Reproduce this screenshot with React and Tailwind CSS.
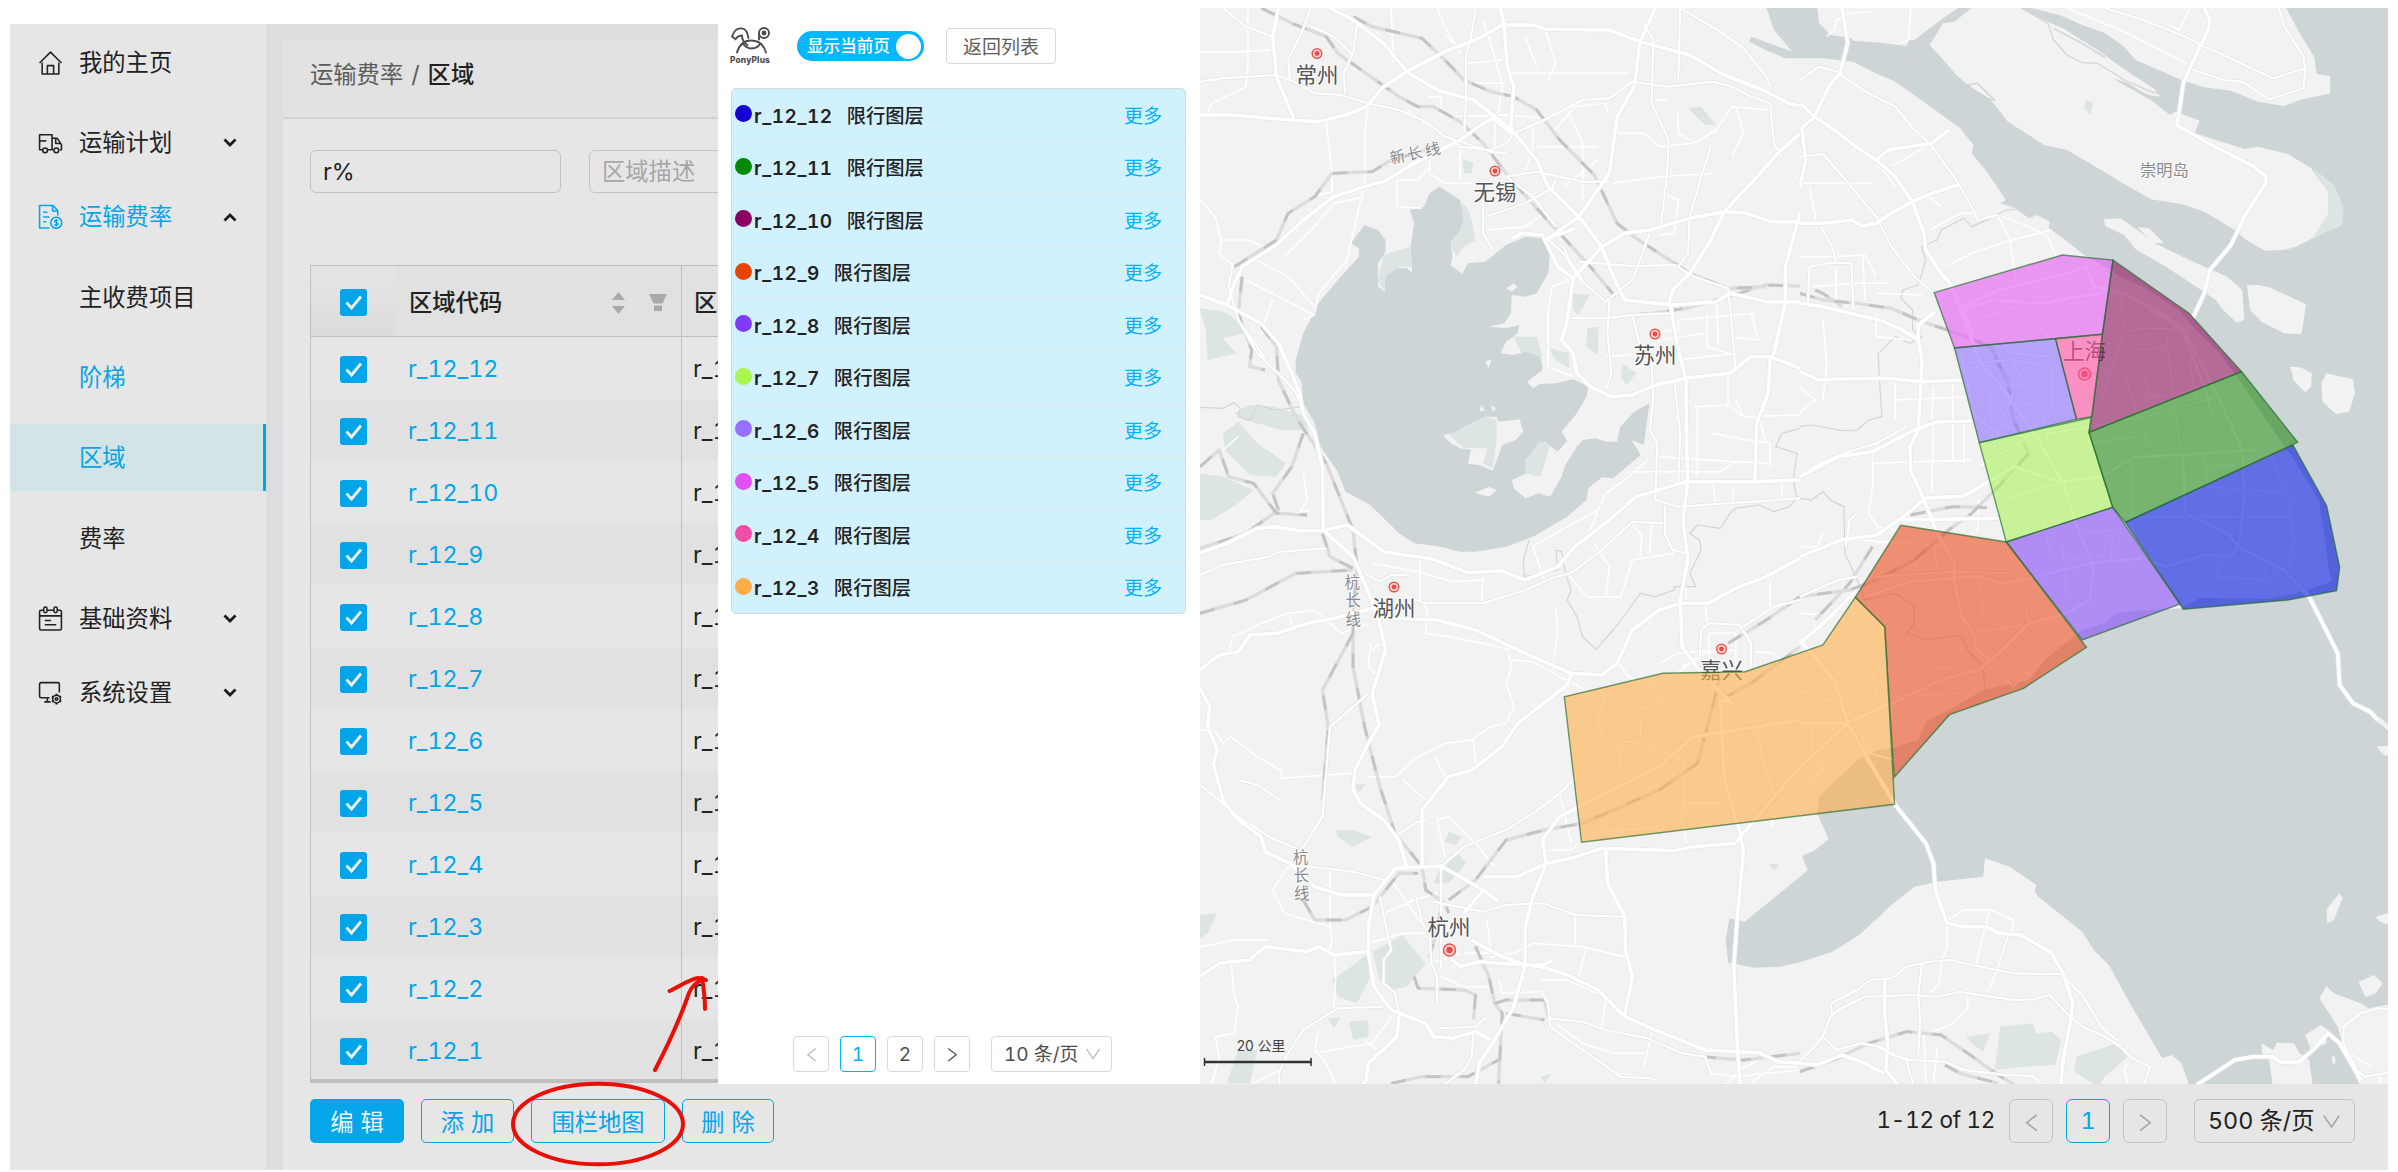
import React from "react";

const nav = [
  { label: "我的主页", icon: "home", gap: "mt-[5px]" },
  { label: "运输计划", icon: "truck", arrow: "down", gap: "mt-[13px]" },
  { label: "运输费率", icon: "bill", arrow: "up", active: true, gap: "mt-[7px]" },
  { label: "主收费项目", gap: "mt-[14px]" },
  { label: "阶梯", active: true, gap: "mt-[13px]" },
  { label: "区域", active: true, selected: true, gap: "mt-[13px]" },
  { label: "费率", gap: "mt-[14px]" },
  { label: "基础资料", icon: "calendar", arrow: "down", gap: "mt-[13px]" },
  { label: "系统设置", icon: "monitor", arrow: "down", gap: "mt-[7px]" },
];

const iconPaths = {
  home: (
    <>
      <path d="M1.5 12.5 12 2l10.5 10.5" />
      <path d="M4 12v11h16V12" />
      <path d="M9 23v-8h6v8" />
    </>
  ),
  truck: (
    <>
      <path d="M4 19H1.5V4.500H13.500V19M9.500 19h5" />
      <path d="M13.500 8h5l4 6v5h-1.500M17 8.500V13h5" />
      <path d="M1.500 10.500H8" />
      <circle cx="6.800" cy="19.500" r="2.300" />
      <circle cx="17.600" cy="19.500" r="2.300" />
    </>
  ),
  bill: (
    <>
      <path d="M11 23H1.500V1.500h13l4.500 5V11" />
      <path d="M14 1.800v5h5M5 8h4M5 12.500h6M5 17h3" />
      <circle cx="17.500" cy="18" r="5.300" />
      <path d="M19.300 16.200c-.8-1-3.400-.9-3.400.5 0 1.600 3.500.7 3.500 2.500 0 1.500-2.900 1.600-3.700.3M17.600 14.500v7" strokeWidth="1.200" />
    </>
  ),
  calendar: (
    <>
      <rect x="1.500" y="4" width="21" height="19" rx="1.500" />
      <path d="M1.500 9.500h21M6.500 14h6M6.500 18h11" />
      <rect x="5.500" y="1" width="3.200" height="5.500" rx="1.600" fill="#e6e6e6" />
      <rect x="15.300" y="1" width="3.200" height="5.500" rx="1.600" fill="#e6e6e6" />
    </>
  ),
  monitor: (
    <>
      <path d="M11 17H3a1.500 1.500 0 0 1-1.500-1.500V4A1.500 1.500 0 0 1 3 2.500h16A1.500 1.500 0 0 1 20.500 4v8M9 17v4M6 21h6" />
      <circle cx="17.800" cy="18.300" r="3.700" />
      <circle cx="17.800" cy="18.300" r="1.200" />
      <path d="M17.800 13.200v1.400M17.800 22v1.400M22.200 15.700l-1.200.7M14.600 20.100l-1.200.7M13.400 15.700l1.200.7M21 20.100l1.200.7" strokeWidth="2" />
    </>
  ),
};

function NavItem({ item }) {
  const tone = item.active ? "text-[#05a5e9]" : "text-[#222]";
  const bg = item.selected ? "bg-[#d3e4e7] border-r-[3px] border-[#05a5e9]" : "";
  return (
    <div className={`flex h-[67px] shrink-0 items-center ${item.gap} ${bg} ${tone}`}>
      <div className="flex w-[69px] pl-[28px]">
        {item.icon && (
          <svg className="size-[25px]" viewBox="0 0 24 24" fill="none" stroke="currentColor" strokeWidth="1.5" strokeLinejoin="round">
            {iconPaths[item.icon]}
          </svg>
        )}
      </div>
      <span className="w-[144px] text-[23.3px] leading-none">{item.label}</span>
      {item.arrow && (
        <svg className="size-[14px] text-[#1b1b1b]" viewBox="0 0 14 14" fill="none" stroke="currentColor" strokeWidth="2.800">
          <path d={item.arrow === "down" ? "M1.500 3.500 7 9l5.500-5.500" : "M1.500 10.500 7 5l5.500 5.500"} />
        </svg>
      )}
    </div>
  );
}

function Check() {
  return (
    <span className="flex size-[27px] items-center justify-center rounded-[3px] bg-[#03a4e8]">
      <svg className="size-[19px]" viewBox="0 0 19 19" fill="none" stroke="#e9f3f7" strokeWidth="2.800">
        <path d="m2.500 9.500 5 5.500L17 3.500" />
      </svg>
    </span>
  );
}

const codes = [12, 11, 10, 9, 8, 7, 6, 5, 4, 3, 2, 1];

const layers = [
  { code: "r_12_12", dot: "bg-[#1700d6]" },
  { code: "r_12_11", dot: "bg-[#048a04]" },
  { code: "r_12_10", dot: "bg-[#8a0060]" },
  { code: "r_12_9", dot: "bg-[#e64403]" },
  { code: "r_12_8", dot: "bg-[#7f3cf8]" },
  { code: "r_12_7", dot: "bg-[#a9f64c]" },
  { code: "r_12_6", dot: "bg-[#9770ff]" },
  { code: "r_12_5", dot: "bg-[#e34ff5]" },
  { code: "r_12_4", dot: "bg-[#f04ea6]" },
  { code: "r_12_3", dot: "bg-[#fdae49]" },
];

function Chevron({ dir, className }) {
  const d = { left: "M12.500 1.500 4 8.200l8.500 6.700", right: "M3.500 1.500 12 8.200l-8.500 6.700", down: "M1.500 3 8 12.500 14.500 3" }[dir];
  return (
    <svg className={className} viewBox="0 0 16 16" fill="none" stroke="currentColor" strokeWidth="1.300">
      <path d={d} />
    </svg>
  );
}

/* Map geometry. West paths use the west tile grid, east paths the east tile grid. */
const WEST = "translate(1200 0) scale(0.38265 0.33333)";
const EAST = "translate(1800 0) scale(0.38139 0.33333)";

const lake =
  "M625 560 660 585 680 600 688 660 680 690 655 730 660 770 655 795 685 822 700 790 745 785 800 735 850 710 895 715 915 750 910 820 880 880 850 890 815 885 812 940 795 970 755 980 800 985 835 975 830 1000 800 1025 785 1060 820 1065 850 1055 890 1070 895 1110 855 1145 870 1165 890 1152 930 1150 975 1138 1015 1160 1010 1190 985 1240 945 1295 960 1322 935 1355 900 1325 880 1345 850 1380 862 1415 815 1440 820 1465 850 1495 885 1480 915 1490 945 1430 955 1395 985 1340 1000 1320 1035 1315 1060 1325 1090 1325 1098 1280 1135 1235 1175 1210 1165 1290 1160 1335 1128 1320 1152 1365 1080 1435 1050 1432 1015 1465 1010 1500 960 1550 870 1610 800 1640 720 1655 680 1655 630 1640 560 1630 520 1600 445 1515 380 1475 360 1415 315 1340 300 1270 270 1210 265 1145 250 1120 250 1080 270 1000 310 910 360 840 415 770 415 745 395 730 430 675 465 690 485 720 485 755 465 790 465 860 482 875 485 830 515 805 540 805 555 820 550 740 560 670 548 630 585 620 600 580Z";

const sea =
  "M-88 24-68 90-20 155-75 132-128 110-133 125-90 150-38 175 0 175 60 175 140 185 190 215 250 245 330 310 420 385 455 435 450 460 490 515 540 600 525 610 560 622 600 655 622 645 655 665 652 685 690 715 745 765 800 800 840 830 900 860 1000 935 1030 980 1100 1060 1158 1150 1240 1290 1290 1370 1360 1500 1375 1600 1385 1700 1395 1745 1300 1780 1230 1797 1050 1793 1000 1825 900 1830 830 1840 800 1870 740 1890 650 1970 600 2040 480 2070 400 2125 330 2165 310 2220 245 2245 200 2252 150 2280 50 2390 45 2440 75 2518 40 2550 5 2568 20 2610 0 2630-145 2765-185 2755-195 2820-188 2888-120 2903-50 2900 0 2887 85 2855 155 2805 245 2710 300 2660 360 2645 480 2630 485 2575 550 2600 620 2655 615 2672 625 2690 740 2795 770 2850 810 2895 870 3020 950 3175 975 3165 1000 3190 1022 3260 1560 3260 1560 24Z";

const eastLand = [
  "M45 24 50 70 80 105 135 115 138 122 210 128 280 138 285 120 300 120 375 55 415 24Z",
  "M450 24 405 65 375 70 340 135 380 185 410 225 440 255 495 295 515 320 545 365 600 405 640 435 700 450 760 490 840 545 920 598 1000 612 1060 635 1140 690 1170 720 1220 752 1270 750 1300 740 1345 715 1372 700 1385 640 1385 575 1340 505 1280 462 1200 440 1165 447 1035 400 1048 362 985 335 970 345 920 300 850 255 820 235 860 250 910 285 945 290 930 268 860 215 780 150 690 85 640 60 580 24Z",
  "M605 24 680 45 740 75 800 100 850 140 880 180 930 205 1000 240 1060 262 1130 272 1200 305 1270 318 1310 300 1390 280 1390 228 1355 222 1348 170 1310 100 1275 24Z",
  "M797 658 840 655 885 690 930 730 1040 790 1120 830 1160 870 1165 960 1145 968 1110 930 1090 900 1055 872 960 800 880 748 850 705 800 678Z",
  "M885 682 915 685 955 730 925 728Z",
  "M1172 855 1200 855 1230 862 1327 912 1315 1003 1270 1000 1210 965 1180 930Z",
  "M1285 1100 1312 1102 1342 1120 1340 1160 1325 1177 1295 1142Z",
  "M1380 1120 1450 1138 1455 1180 1440 1235 1405 1242 1370 1205 1367 1150Z",
  "M1502 2155 1520 2150 1560 2195 1560 2210 1530 2180Z",
  "M1512 2240 1560 2235 1560 2270 1530 2265Z",
  "M1415 2680 1422 2695 1400 2760 1383 2770 1380 2730 1400 2700Z",
  "M1510 2750 1545 2738 1545 2775 1520 2765Z",
  "M1465 2945 1505 2925 1528 2950 1510 2980 1482 2992Z",
  "M1380 2958 1400 2980 1470 3010 1490 3025 1560 3010 1560 3260 1470 3260 1430 3170 1410 3080 1362 2995Z",
  "M1325 3105 1365 3075 1385 3090 1380 3130 1340 3150Z",
  "M1210 3130 1240 3150 1250 3128 1295 3130 1310 3160 1335 3180 1345 3260 1240 3260 1230 3180 1212 3165Z",
  "M1395 3165 1405 3175 1402 3195 1395 3185Z",
];

const lakeIsles = [
  "M635 1305 660 1300 700 1275 745 1250 775 1250 780 1265 835 1258 845 1295 825 1320 790 1335 765 1412 730 1395 700 1392 708 1350 680 1345 655 1330Z",
  "M800 865 820 850 830 860 815 875Z",
  "M745 1085 762 1078 755 1105Z",
  "M755 1460 775 1470 755 1490 718 1478Z",
  "M735 1215 745 1230 730 1235ZM760 1215 775 1225 765 1235Z",
];

const parksWest = [
  "M0 925 60 935 85 950 120 1000 60 1015 95 1060 20 1080 15 990Z",
  "M650 580 700 625 710 660 720 720 690 740 670 770 655 735 685 680Z",
  "M480 765 550 740 552 800 520 800 490 835 480 870 465 840Z",
  "M685 475 715 490 710 520 690 520Z",
  "M1275 325 1310 320 1348 375 1320 375Z",
  "M975 880 1018 885 990 945 975 930Z",
  "M1012 985 1042 980 1040 1065 1010 1040Z",
  "M1105 1090 1140 1120 1115 1155 1100 1130Z",
  "M820 1010 880 1010 895 1070 840 1060Z",
  "M915 1045 965 1060 965 1105 925 1075Z",
  "M90 1240 130 1215 190 1220 285 1250 280 1290 210 1290 150 1270 115 1260Z",
  "M60 1300 100 1265 150 1330 225 1390 200 1430 130 1425 65 1350Z",
  "M0 1420 60 1430 140 1470 100 1510 30 1560 0 1560Z",
  "M650 1305 745 1250 775 1260 775 1320 765 1405 740 1390 750 1345 690 1345Z",
  "M885 1325 915 1335 905 1370 890 1430 850 1420 850 1385Z",
  "M355 2490 400 2490 450 2510 400 2540 360 2510Z",
  "M650 2495 685 2510 670 2535 640 2525Z",
  "M670 2555 695 2590 650 2650 610 2650 630 2600Z",
  "M0 2745 45 2740 20 2800 0 2815Z",
  "M450 2855 530 2805 560 2850 590 2890 540 2960 500 2970 470 2940Z",
  "M345 2940 395 2900 440 2860 450 2920 410 3010 360 2990Z",
  "M335 3055 368 3050 350 3085ZM390 3065 440 3060 440 3110 400 3120Z",
  "M100 3150 150 3150 130 3250 70 3250Z",
  "M405 2355 435 2350 415 2378ZM1485 2590 1515 2595 1500 2612ZM890 3230 920 3220 900 3250Z",
];

const parksEast = [
  "M750 300 770 310 760 345 745 325Z",
  "M1345 505 1400 555 1425 620 1422 675 1345 715 1385 640 1385 575Z",
  "M435 3110 498 3100 480 3155 450 3130Z",
  "M525 3080 610 3070 620 3100 660 3095 685 3120 670 3195 590 3200 510 3210Z",
  "M725 3170 830 3130 860 3170 800 3230 780 3260 720 3215Z",
  "M365 1550 395 1550 385 1565Z",
];

const majorWest = [
  "M205 24 190 110 200 230 245 355",
  "M0 345 80 345 240 360 310 365 380 345 435 320 480 260 540 215 640 155 720 120 790 75 870 75 905 88 1070 90 1150 125 1280 165 1370 225 1470 270 1540 310 1568 318",
  "M340 24 400 60 480 130 540 215 620 270 715 300 815 390 880 480 910 560 990 650 1050 740 1080 830 1110 900 1235 915 1350 905 1385 880 1480 905 1568 905",
  "M785 24 795 75 803 200 820 260 812 380 820 400",
  "M0 885 70 915 160 970 205 1030 240 1120 260 1180 270 1240 300 1300 320 1400 322 1590 400 1670 445 1790 465 1850 485 1950 450 2080 468 2175 440 2230 405 2310 400 2370 420 2410 480 2460 520 2520 540 2600",
  "M70 915 90 850 110 800 200 735 270 660 350 590 430 560 480 545 560 490 680 420 740 370 765 355 815 400",
  "M1190 24 1150 125 1135 260 1090 350 1070 520 990 650 910 715 980 685",
  "M815 715 840 700 895 705 935 800 975 835 1050 740 1110 700 1175 690 1280 655 1370 635 1430 640 1490 665 1568 665",
  "M975 835 960 960 945 1020 975 1060 985 1120 1020 1160 1075 1190 1130 1185 1190 1155 1270 1135 1385 1120 1440 1070 1490 1070 1568 1105",
  "M1230 915 1245 1020 1270 1140 1272 1350 1275 1440 1262 1560 1275 1680 1255 1800 1260 1940 1310 2020 1390 2110 1360 2100 1370 2340 1412 2500 1420 2560 1405 2740 1395 2900 1405 3150 1412 3260",
  "M1225 915 1235 870 1280 820 1330 730 1370 635 1440 550 1510 460 1568 400",
  "M1568 640 1530 800 1530 905 1500 1060 1490 1080 1485 1180 1455 1270 1450 1440",
  "M0 1660 70 1630 150 1585 200 1580 260 1592 320 1592 385 1575 480 1655 610 1678 700 1718 785 1712 850 1740 935 1700 980 1640 1070 1560 1140 1490 1270 1445 1450 1445 1568 1440",
  "M0 2010 50 1965 100 1955 130 1905 200 1900 280 1870 350 1855 450 1825 510 1855 620 1860 720 1890 850 1960 970 2020 1050 2025 1090 1990 1130 1890 1200 1830 1255 1810 1330 1810 1400 1765 1480 1730 1568 1675",
  "M970 2020 960 2055 830 2170 790 2240 710 2310 650 2330 580 2430 580 2595",
  "M0 2065 25 2120 20 2180 45 2250 35 2290 60 2400 95 2455 160 2510 170 2555 235 2590 300 2660 370 2685 455 2685 510 2605 630 2598 740 2670 780 2705",
  "M455 2685 440 2780 440 2860 455 2960 500 3030 590 3070 610 3110 660 3115 720 3095 760 3120",
  "M0 2930 50 2890 130 2880 170 2840 280 2855 310 2840 350 2865 435 2855",
  "M520 3045 515 3110 440 3190 435 3240 420 3260",
  "M710 2820 780 2865 850 2895 900 2895 920 2880M655 2875 680 2900 730 2885 850 2895 850 2780 870 2690 905 2590 895 2520 940 2450 990 2420 1130 2340 1200 2300 1290 2210 1568 2160",
  "M740 2670 690 2740M740 2630 830 2630 905 2590 970 2575 1050 2545 1240 2552 1290 2540 1400 2530 1412 2510 1568 2300",
  "M850 2895 820 3020 770 3120 730 3190 720 3260",
  "M850 2895 890 2900 960 2925 1040 2970 1110 3050 1200 3095 1320 3150 1405 3155 1460 3158 1510 3185 1568 3190",
  "M1060 2545 1065 2650 1110 2750 1112 2850 1130 2930 1110 3045",
];

const midWest = [
  "M0 245 60 235 200 225 245 245 300 280 370 285 440 310 520 330 590 365 640 410 760 455 800 460",
  "M60 24 120 80 190 110M290 24 265 100 230 180 235 240",
  "M410 75 400 160 375 220 380 280M285 75 350 110 400 165",
  "M820 400 900 360 1000 300 1070 295 1130 245 1220 260 1340 245 1390 260 1440 290 1490 310 1500 430 1520 470",
  "M1160 75 1185 120 1180 310 1225 420 1220 530 1205 670",
  "M1255 24 1250 240M1255 24 1360 95 1420 145 1480 230 1490 260",
  "M800 530 880 515 1000 545 1070 545M800 530 870 590 930 680",
  "M1335 440 1310 530 1280 650 1275 760 1250 800",
  "M990 785 1130 798 1240 795 1290 830 1380 865 1390 980 1400 1110",
  "M970 955 1060 955 1130 945 1240 940M1070 900 1065 1000 1075 1120 1060 1170",
  "M720 24 710 100 695 170 695 300 690 400",
  "M650 410 680 440 760 450 800 430 820 400M770 360 770 440",
  "M740 600 740 700 765 750M745 650 850 610 920 565 930 540",
  "M905 715 950 760 990 835 1060 905M950 740 970 790 1000 840",
  "M1060 905 1130 840 1175 700M1130 945 1150 1040 1180 1080 1185 1200 1175 1290 1195 1330 1190 1500 1250 1520 1568 1495",
  "M1240 1140 1245 1200 1255 1300 1250 1450M1215 1520 1215 1600 1235 1650 1275 1660",
  "M0 1725 60 1695 180 1670 210 1655 330 1645",
  "M430 1720 470 1745 500 1725 540 1725M520 1780 590 1810 740 1810 850 1770 930 1730 970 1720 1050 1650 1130 1565 1210 1570",
  "M440 2080 400 2120 340 2180 330 2320 320 2450 265 2550M250 2595 400 2615 480 2640",
  "M0 2355 40 2390 100 2450 180 2510 250 2545",
  "M630 2600 630 2900M520 2500 570 2465 590 2460",
  "M470 2690 490 2800 500 2850 480 2880 480 2950 510 2980 520 3040",
  "M630 2600 690 2540 800 2490 870 2440 940 2380 985 2330",
  "M610 2705 740 2735 800 2715 900 2710 980 2745 1110 2750",
  "M565 2690 580 2770 600 2800 605 2890 620 2930 620 3010",
  "M480 3020 360 3025 270 3090 230 3160 205 3220 210 3260",
  "M890 2970 910 3010 915 3080 1000 3150 1100 3230 1180 3235",
  "M910 3055 1000 3065 1060 3090 1170 3115 1260 3160 1320 3170 1340 3230",
  "M625 3085 720 3080 750 3050M715 3090 710 3170 690 3210 630 3260",
  "M1310 1890 1330 1870 1410 1875 1440 1930 1440 2010M1310 1890 1305 1980",
  "M1568 1800 1500 1820 1420 1880M1050 2215 1150 2230 1155 2130 1130 2080",
  "M100 2340 150 2355 210 2400",
  "M85 800 75 860 100 960 150 1060 240 1160 260 1200M100 960 170 1075",
];

const minorWest = [
  "M0 155 100 155 190 150M125 24 125 200 120 260 30 310 20 340M330 365 345 520 345 575 290 590M440 320 430 400 430 550 400 700 380 800",
  "M430 590 350 610 290 690 220 770M300 940 310 880 390 770M0 600 40 650 55 720 50 760 90 800M55 720 130 720 180 750",
  "M130 770 230 830 300 920M190 900 170 960 160 1000M120 840 300 945 270 960",
  "M500 24 505 190M620 24 640 80 680 160M740 60 770 170 790 260 780 340M850 110 880 200M900 80 930 190 910 240M800 220 1120 220",
  "M700 190 790 180M700 250 800 250M640 350 800 345 900 355M595 290 630 290 630 350M540 330 600 380",
  "M920 400 980 320 1060 310 1065 340M870 380 870 450 850 510M960 330 1000 430 1000 600M880 440 1040 440M1040 480 950 560",
  "M1080 400 1160 400 1200 440 1290 430 1350 390 1390 320 1490 330M1250 340 1250 400 1290 425M1080 550 1200 530 1340 520M1400 320 1420 400 1390 470",
  "M515 540 515 620 580 625M515 540 570 540 600 500M600 440 600 520 640 550 710 550M680 450 680 540",
  "M910 1100 910 930 920 860 980 835M1060 1070 1170 1060 1200 1020 1320 1000M1250 1000 1250 960 1450 940M1325 940 1325 1040 1380 1060M1350 900 1355 1030M1390 1010 1460 1020 1440 940M1250 1080 1400 1060",
  "M920 1105 975 1130M1130 1415 1210 1415 1360 1415 1400 1385 1490 1390M1200 1370 1400 1385M1290 1220 1380 1215 1420 1250 1568 1245M1300 1220 1300 1430M1380 1120 1380 1215M1340 1300 1430 1320 1490 1330 1490 1400M1340 1450 1350 1520M1395 1460 1390 1520M1520 1440 1520 1500",
  "M1040 1530 1060 1480 1110 1440 1170 1380M870 1640 960 1580 1040 1530 1010 1620M870 1640 900 1740M1030 1630 1070 1700 1060 1790M960 1720 1010 1790 1100 1790 1130 1680 1240 1660M1130 1570 1155 1610 1150 1670M1180 1570 1175 1660",
  "M575 1685 575 1800 595 1830 590 1900 650 1910 740 1930 810 1950M450 1690 570 1715 660 1745 740 1740M740 1730 735 1810M930 1820 935 1900 920 2010",
  "M805 1960 815 2000 800 2050 820 2120 800 2170 760 2180M810 1980 870 1985 940 2030 1000 2065M440 2330 510 2330 570 2270 640 2230 710 2220 760 2180M615 2270 640 2330M715 2220 720 2290",
  "M0 2190 40 2195 60 2230 80 2210 150 2270 210 2310 215 2335 330 2325 400 2320M75 1960 85 1910 160 1870 230 1840 300 1830 370 1900 440 1870M235 1850 240 1880M445 1930 440 2000 465 2030M470 1930 450 1950",
  "M300 2600 230 2600 190 2670 220 2740 340 2780 345 2820 335 2860M340 2610 340 2780M480 2740 560 2700 620 2680M500 2640 560 2740 590 2790M440 2830 530 2800 590 2800M0 2840 90 2820 180 2820M80 2880 90 2990 100 3020 90 3100 40 3110 50 3170 30 3260",
  "M350 2870 355 2930 350 3020M310 3090 300 3150 330 3190 355 3260M300 3160 390 3140 450 3130 500 3050M430 3120 460 3150M140 3250 210 3210M530 2340 560 2370 590 2400",
  "M620 2460 650 2450 720 2530 770 2600M620 2460 640 2570M940 2380 960 2480 970 2530M910 2550 970 2550 1000 2520M750 2760 760 2850M760 2870 820 2860 870 2830 1000 2840 1110 2870M980 2750 980 2840M1010 2840 990 2930",
  "M690 2860 770 2860M600 2890 680 2860M760 2960 690 2960 630 2930M890 2940 960 2940 1040 2980M1060 3000 1050 3080M1180 3100 1160 3200M930 3070 1000 3130 1080 3160 1160 3160M850 2930 820 2980M780 2940 790 2980 890 2975",
  "M1330 1900 1330 2010 1400 2010 1400 1900ZM1260 2000 1320 1960 1400 1950M1450 1955 1500 1960 1540 2010M1490 1740 1490 1830M1320 1815 1325 1870M1095 1990 1120 2030 1180 2060 1260 2010 1310 1970M1060 2090 1040 2150 1055 2220M1155 2130 1230 2095",
  "M1095 2240 1095 2310M1150 2230 1260 2280M1260 2480 1265 2270M1260 2410 1370 2410M1450 2150 1470 2280 1500 2380M1490 2480 1510 2440 1568 2420M1270 2530 1265 2480M1020 2500 1200 2480",
  "M640 100 660 130M1190 300 1220 300M1210 580 1250 600 1240 700 1200 705M750 690 850 680 900 640M1180 1000 1240 990M1140 1100 1200 1090M1340 3220 1400 3230 1568 3210M1370 3260 1410 3210 1460 3180M1440 3250 1500 3200 1560 3200M1100 3220 1190 3240",
  "M1270 1760 1270 1800M1200 1990 1250 1960 1350 1950M1460 1250 1480 1330M1400 1200 1420 1250M270 1420 280 1500 260 1540M240 1540 290 1530M100 1310 60 1350",
];

const majorEast = [
  "M110 24 125 130 105 220 75 260 38 350 5 385 15 480 0 560",
  "M0 310 38 350 90 390 140 435 200 480 250 530 295 605 325 700 330 750 370 820 400 860 430 930 455 1010",
  "M200 480 230 450 345 430 390 390",
  "M0 670 60 670 135 660 165 678 200 670 240 640 295 605 345 580 415 555",
  "M0 910 60 920 150 945 210 960 260 985 310 1020M355 935 310 975 310 1020 320 1080 317 1150 310 1290 288 1340 290 1410 325 1500 360 1600 405 1690 405 1750 425 1850 460 1910 460 1945 495 1975",
  "M0 1115 50 1140 100 1137 230 1135 317 1145 430 1140",
  "M1060 24 1075 60 1070 90 1020 210 1005 250 995 330 988 375 1080 435 1190 500 1222 530 1220 550 1165 650 1130 735 1075 810 1060 880 1030 955",
  "M0 1430 100 1370 190 1355 300 1290 360 1265 450 1263",
  "M0 1670 110 1620 200 1605 260 1560 330 1495 430 1488 560 1400 680 1445 790 1430 880 1370 1000 1365 1190 1350",
  "M265 1560 520 1555M145 1775 80 1850 0 1930",
  "M170 1790 290 1745 400 1735 470 1730 530 1750 600 1735 760 1690 900 1675",
  "M240 2170 240 2110 380 2035 470 2010 530 1950 600 1870 700 1840 760 1800 770 1700 720 1560 690 1450 620 1310 540 1180 470 1080 410 900",
  "M0 1920 90 2040 125 2170 200 2320 250 2415 330 2530 350 2590 355 2670 385 2770 430 2780 490 2780 520 2800 580 2805 660 2860 690 2920 715 3010 710 3060 690 3180 683 3260",
  "M0 2170 120 2170 240 2110M125 2170 50 2250 0 2300",
  "M920 1685 960 1700 1060 1665 1130 1670 1150 1640 1210 1675 1270 1710 1335 1790 1410 1960 1415 2055 1450 2110 1495 2135 1515 2160",
  "M1005 1370 1010 1540 1120 1600 1150 1640 1165 1500 1160 1350",
  "M430 920 520 870 700 820 750 800 770 860 850 880 950 950 1010 1000 1100 1200 1160 1350",
  "M390 860 430 930 500 900 640 910 700 895 790 880M850 880 940 930 1000 985 1060 1160 1080 1240",
  "M1040 3255 1080 3225 1140 3180 1190 3170 1240 3170 1260 3187 1310 3185 1345 3150 1385 3100 1415 3130 1450 3200 1470 3240",
  "M222 2940 222 3040 230 3130 225 3210 260 3260M0 3190 45 3195 110 3165 160 3185 220 3220",
];

const midEast = [
  "M0 470 60 462 120 540 200 650 240 740 300 830 350 878M100 220 180 280 250 320 300 390 340 430 410 540 450 620 465 660 520 645",
  "M0 240 50 200 100 215M55 680 85 740 95 790M20 915 25 800 80 788 135 790 140 930",
  "M800 24 900 60 1010 110 1060 140 1110 165 1240 235 1325 205 1320 265 1230 298 1160 245 1110 240 1030 210M1255 24 1270 80 1320 170 1325 215",
  "M0 1430 60 1385 130 1355 200 1330 280 1280M0 1790 100 1740 150 1730",
  "M455 960 600 910 700 900M470 1010 560 1060 650 1070M440 1090 560 1080 650 1100M520 1000 560 1090 640 1260 650 1330M420 1050 460 1250 520 1300 600 1310",
  "M510 1340 530 1260 560 1180M470 1400 600 1310 760 1280 900 1250 1100 1190M820 1000 900 985 1020 990M780 1100 850 1120 890 1260M960 1000 980 1200 1000 1370",
  "M120 1640 130 1560 150 1540M200 1730 400 1715 550 1720M540 1640 570 1720 590 1800 600 1870M820 1600 815 1680M540 1700 480 1640",
  "M80 3010 150 2970 185 2940 240 2935 280 2900 340 2885 395 2880 450 2895 560 2920 690 2923",
  "M60 3110 80 3050 100 3030 170 2990 300 2985 360 2990 420 2975 470 2985 560 3000 615 2998 655 2985 700 3040 740 3080 800 3110 840 3140 870 3175 918 3200 900 3260",
  "M80 3010 85 3050M320 2890 310 2980 315 3060 310 3165M700 2940 740 2985 790 3080 830 3120M545 2810 520 2900",
  "M0 3180 30 3150 60 3110 95 3150 160 3130 210 3140 240 3165 290 3180M200 3140 280 3180 290 3230 300 3260M290 3180 380 3185 430 3210 540 3225 610 3228 640 3260",
  "M1560 3030 1515 3025 1470 3040 1425 3080 1425 3130 1460 3210 1480 3230 1560 3215",
];

const minorEast = [
  "M290 24 285 120 260 130M70 110 90 90 95 60 130 40 185 35M0 550 190 550M25 560 45 680M0 770 90 770 170 765 200 830M200 880 320 885M30 860 150 850 230 850M95 800 95 930M165 770 170 900",
  "M390 795 450 760 540 725 660 690M520 650 550 720 565 840M530 650 600 680 650 710 670 765M340 690 420 640 470 640M200 480 250 560M240 500 330 440M340 590 370 620M200 940 200 1010 290 1020",
  "M245 1200 450 1190M250 1150 250 1260M350 1160 345 1260M400 1150 400 1380M190 1360 190 1460 180 1540 205 1580 260 1590M190 1390 450 1380M350 1280 345 1480M430 1270 430 1390",
  "M700 24 860 100 1015 190M960 70 995 90 1020 30M0 1160 40 1200 25 1210 0 1240M60 960 70 1100 60 1200M0 1640 45 1640 60 1600M150 1620 400 1640M0 1840 60 1845M470 1500 465 1600",
  "M840 860 850 1000 820 1100 790 1200M880 1050 980 1040 1060 1030M870 1180 970 1190 1080 1150M900 1120 940 1250M1020 1080 1040 1200M600 930 640 1000 700 1060 760 1080M460 1100 520 1150 640 1160M560 1000 600 1090M500 1180 500 1260 560 1290",
  "M870 1400 870 1600M900 1300 920 1340M780 1540 900 1550 1150 1550 1280 1550M1060 1370 1070 1460 1290 1480M1240 1370 1280 1500 1295 1620 1280 1700M1100 1650 1095 1730 1230 1740 1260 1700M1210 1690 1230 1740M1060 1400 1190 1390",
  "M690 1640 700 1800M640 1570 660 1680M540 1610 560 1550 640 1520M740 1600 820 1590M700 1680 830 1660M740 1300 760 1330 880 1310M540 1500 640 1460 730 1440M510 1200 640 1220",
  "M300 1680 310 1740M350 1620 360 1720M470 1700 480 1850M240 2050 360 2000 410 2010M490 1990 560 2060 600 2010M120 1870 90 1900M540 1990 600 2020M250 2090 420 2080M430 1900 560 1880 680 1860M190 2010 200 2080",
  "M0 2070 60 2100 120 2110M30 2180 30 2260 70 2320M160 2200 180 2260 250 2280M0 2370 60 2310M390 2760 430 2730 500 2730 560 2760 555 2800M495 2735 460 2900M385 2780 385 2840 370 2900 365 2950 345 2975M520 2900 495 2970M440 2990 440 3025 400 3070 350 3095",
  "M325 3100 330 3250M360 3140 350 3250M860 3190 850 3210 860 3250M1440 3160 1500 3200M1520 3230 1525 3260M640 1180 700 1200 740 1190M660 1100 660 1230",
];

const railWest = [
  "M160 24 240 70 330 110 360 160 440 225 520 290 570 320 610 320 680 365 740 430 800 520 860 600 940 700 1020 800 1085 890M1130 945 1180 940 1270 925 1380 890 1480 855 1568 858",
  "M400 50 450 80 580 115 640 180 690 240 760 275 820 290 880 330 940 420 1030 525 1090 670 1140 715 1280 820 1380 865 1480 860",
  "M90 800 200 720 230 640 300 590 345 520 450 515 500 480 620 440",
  "M110 830 100 940 135 1050 130 1100 170 1110M160 980 200 1040 205 1140 250 1250 330 1390 400 1590 410 1700 400 1850 400 2000 430 2180 470 2360 510 2500 580 2600 590 2670 640 2710 650 2740",
  "M0 1400 50 1350 75 1430 140 1450 200 1540 280 1545M270 1300 240 1400 190 1480 205 1530 120 1600 0 1645M320 1600 340 1670 400 1705M0 1840 120 1800 250 1720 400 1710",
  "M400 1900 320 2070 335 2180 320 2400M270 2700 300 2760 380 2760 450 2720 520 2620 570 2620",
  "M630 2730 610 2830 600 2870M560 2930 570 2965 690 2970 720 2985 715 3060M720 2840 755 2930 770 3010 790 3040 780 3250M500 3250 580 3230 700 3230 780 3180M770 3010 800 3000 900 3000 910 3050M800 3040 900 3060",
  "M650 2700 720 2640 800 2520 900 2490 1000 2470 1200 2370 1300 2290 1340 2120 1360 2020M1360 2100 1440 2050 1568 1940M1380 1930 1480 1860 1568 1790M1310 3170 1420 3180 1568 3160",
];

const railEast = [
  "M0 880 60 900 150 910 240 925 320 965 400 995 500 1040 545 1150 560 1260 600 1360 520 1460 450 1540 390 1590 300 1680 200 1740 130 1770 0 1790",
  "M40 870 60 880 110 920M290 1545 400 1520 490 1523M0 3215 90 3180 180 3130 280 3095 370 3105 440 3160 520 3225 570 3260M380 3195 420 3220 520 3250",
  "M190 1640 130 1750 40 1860",
];

const borderWest =
  "M0 1222 60 1225 90 1208 105 1225 100 1250 130 1260 150 1215 200 1230 270 1220M860 1620 845 1680 848 1730 890 1720 935 1710 930 1650 945 1655 955 1720 970 1770 960 1800 985 1850 1000 1910 1035 1948 1080 1890 1120 1830 1150 1780 1190 1790 1240 1770 1240 1760 1295 1760 1280 1720 1310 1650 1305 1620 1280 1600 1300 1575 1360 1585 1385 1540 1400 1525 1460 1515 1500 1535 1540 1520 1560 1495 1550 1440 1560 1360 1505 1340 1520 1300 1568 1285";
const borderEast =
  "M0 1280 30 1275 110 1292 150 1290 180 1260 215 1250 210 1170 205 1060 250 1010 290 1030 320 1010 295 990 295 930 265 895 270 870 310 855 330 780 318 740 360 720 370 690 430 655 450 680 500 655 540 630 570 628 612 548 500 435 320 190 280 183 380 60 440 24M580 24 650 70 665 120 700 165 740 188 780 190 850 240 920 275 970 290 1080 335 1410 435M0 1495 30 1500 60 1475 80 1500 115 1520 118 1660 150 1740 170 1800 250 1780 300 1820 300 1870 280 1900 330 1920 420 1905 440 1950 480 2000 485 2070M595 2088 700 2092 830 2080M885 2072 940 2050 1000 2045M1170 2018 1240 2005 1330 1940M1460 1872 1542 1815";

const zones = [
  { fill: "#e159f2", points: "1934.2,292.7 2062.4,255 2113,260 2102.4,334.3 1954.5,348" },
  { fill: "#8c115c", points: "2113,260 2189,313.3 2241.6,371.7 2089,432.3 2091.8,416.7 2102.4,334.3" },
  { fill: "#8c6eff", points: "1954.5,348 2055.5,338.7 2076.5,419.3 1979.3,442.7" },
  { fill: "#fc4fa2", points: "2055.5,338.7 2102.4,334.3 2091.8,416.7 2076.5,419.3" },
  { fill: "#acf25c", points: "1979.3,442.7 2091,417.5 2089,432.3 2112.7,507.3 2006.3,542" },
  { fill: "#258b18", points: "2089,432.3 2241.6,371.7 2297.7,442.3 2125.3,522.3 2112.7,507.3" },
  { fill: "#0216db", points: "2293,445 2326.7,506 2339.7,567.3 2336.6,590.7 2288,600 2183.3,609.3 2125.3,522.3" },
  { fill: "#844af7", points: "2006.3,542 2112.7,507.3 2180.2,604 2082.2,640" },
  { fill: "#eb4b1d", points: "1900.7,525.3 2006.3,542 2086.4,647.3 2023.5,688.3 1949.5,714.7 1894.2,777.3 1884.7,626.7 1855.3,597.3" },
  { fill: "#ffae48", points: "1855.3,597.3 1884.7,626.7 1894.6,804.3 1581.5,842.3 1564.3,696.7 1663,673.3 1745.3,671.7 1822.9,645" },
];

const cities = [
  { name: "常州", x: 1317, y: 83, mx: 1317, my: 53.5 },
  { name: "无锡", x: 1495, y: 200, mx: 1495, my: 171 },
  { name: "苏州", x: 1655, y: 363, mx: 1655, my: 334 },
  { name: "湖州", x: 1394, y: 616, mx: 1394, my: 587 },
  { name: "嘉兴", x: 1721.500, y: 678, mx: 1721.500, my: 649 },
  { name: "杭州", x: 1449, y: 935, mx: 1449.500, my: 950, big: true },
  { name: "上海", x: 2084.500, y: 359, mx: 2084.500, my: 374, big: true },
];

function Roads({ transform, minor, mid, major, rail, border }) {
  return (
    <g transform={transform} fill="none" strokeLinejoin="round">
      <path d={border} stroke="#d4d4d4" strokeWidth="1.200" className="[vector-effect:non-scaling-stroke]" />
      <path d={minor.join("")} stroke="#ffffff" strokeWidth="1.500" className="[vector-effect:non-scaling-stroke]" />
      <path d={rail.join("")} stroke="#dcdcdc" strokeWidth="3.400" className="[vector-effect:non-scaling-stroke]" />
      <path d={rail.join("")} stroke="#c3c3c3" strokeWidth="2.800" strokeDasharray="15 20" className="[vector-effect:non-scaling-stroke]" />
      <path d={mid.join("")} stroke="#e5eae8" strokeWidth="3.600" className="[vector-effect:non-scaling-stroke]" />
      <path d={major.join("")} stroke="#e5eae8" strokeWidth="5" className="[vector-effect:non-scaling-stroke]" />
      <path d={mid.join("")} stroke="#ffffff" strokeWidth="2" className="[vector-effect:non-scaling-stroke]" />
      <path d={major.join("")} stroke="#ffffff" strokeWidth="3.500" className="[vector-effect:non-scaling-stroke]" />
    </g>
  );
}

function FenceMap() {
  return (
    <svg className="mt-2 block h-[1076px] w-[1188px] shrink-0 bg-[#f2f2f2]" viewBox="1200 8 1188 1076">
      <g transform={WEST}>
        <path d={parksWest.join("")} fill="#dde5e4" />
        <path d={lake} fill="#cdd5d6" />
        <path d={lakeIsles.join("")} fill="#f2f2f2" />
        <path d={parksWest[13] + parksWest[14]} fill="#dde5e4" />
      </g>
      <g transform={EAST}>
        <path d={sea} fill="#cdd5d6" />
        <path d={eastLand.join("")} fill="#f2f2f2" />
        <path d={parksEast.join("")} fill="#dde5e4" />
        <path d="M440 255 465 250 510 300 480 295ZM665 85 740 130 800 172M830 240 910 285 945 300" fill="none" stroke="#cdd5d6" strokeWidth="4" />
      </g>
      <Roads transform={WEST} minor={minorWest} mid={midWest} major={majorWest} rail={railWest} border={borderWest} />
      <Roads transform={EAST} minor={minorEast} mid={midEast} major={majorEast} rail={railEast} border={borderEast} />
      {cities.map((c) => (
        <g key={c.name}>
          <circle cx={c.mx} cy={c.my} r={c.big ? 6 : 4.800} fill="#f9d9d7" stroke="#ec5650" strokeWidth="1.500" />
          <circle cx={c.mx} cy={c.my} r={c.big ? 3.200 : 2.400} fill="#ea4a42" />
          <text x={c.x} y={c.y} textAnchor="middle" className="text-[21.500px]" fill="#555" stroke="#fff" strokeWidth="2.500" strokeOpacity=".7" paintOrder="stroke">
            {c.name}
          </text>
        </g>
      ))}
      <g className="text-[15.500px]" fill="#8b8b8b" stroke="#fff" strokeWidth="2" strokeOpacity=".6" paintOrder="stroke">
        <text x="1391" y="164" transform="rotate(-12 1391 164)" letterSpacing="2.500">新长线</text>
        <text x="2140" y="175.500" className="text-[16.300px]">崇明岛</text>
        <text x="1344.500" y="588">杭</text>
        <text x="1345.500" y="606">长</text>
        <text x="1345.500" y="625">线</text>
        <text x="1293" y="863">杭</text>
        <text x="1293.500" y="881">长</text>
        <text x="1294" y="899">线</text>
      </g>
      {zones.map((z) => (
        <polygon key={z.points} points={z.points} fill={z.fill} fillOpacity=".6" stroke="#1f6b2b" strokeOpacity=".65" strokeWidth="1.400" />
      ))}
      <text x="1261" y="1051" textAnchor="middle" className="text-[13.800px]" fill="#444">20 公里</text>
      <path d="M1204.500 1058v8M1311 1058v8" stroke="#333" strokeWidth="1.500" />
      <path d="M1204 1062h107.500" stroke="#333" strokeWidth="2.500" />
    </svg>
  );
}

function Logo() {
  return (
    <div className="flex w-[40px] flex-col items-center text-[#4c4c4c]">
      <svg className="h-[27px] w-[39px]" viewBox="0 0 39 27" fill="none" stroke="currentColor" strokeWidth="1.900" strokeLinecap="round">
        <path d="M1 9.500C3 3 7 1.200 10.500 1.400 16 2 16.500 7 17.500 11M1 9.500l3.500 2.700c1.500-2.500 3.500-3.500 6.500-3.700 0 5 3 8 5.500 9.500" />
        <path d="M6 25.500C8 18.500 12 13.500 20 13.500s13 5 15 12M12 16.500c4 6.500 13 6.500 17 .5" />
        <circle cx="33" cy="6" r="5" />
        <circle cx="33" cy="6" r="1.500" fill="currentColor" />
        <path d="M28 6.500v6" />
      </svg>
      <span className="mt-px text-[8.300px] font-extrabold leading-[10px] tracking-[0.200px]">PonyPlus</span>
    </div>
  );
}

function FencePanel() {
  return (
    <div className="flex w-[482px] shrink-0 flex-col bg-white pl-[12px] pt-[27px] tabular-nums">
      <div className="flex h-[38px] items-center">
        <Logo />
        <div className="ml-[27px] flex h-[30px] w-[127px] items-center justify-between rounded-full bg-[#00b7ff] pl-[10px] pr-[3px]">
          <span className="text-[16.600px] font-medium leading-none text-white">显示当前页</span>
          <span className="size-[25px] rounded-full bg-white" />
        </div>
        <div className="ml-[22px] flex h-[36px] w-[110px] items-center justify-center rounded-[4px] border border-[#d9d9d9] pt-[2px] text-[19px] leading-none text-[#5e5e5e]">
          返回列表
        </div>
      </div>
      <div className="ml-px mt-[23px] flex h-[526px] w-[455px] flex-col overflow-hidden rounded-[5px] border border-[#d3dadd] bg-[#d2f1ff]">
        {layers.map((l, i) => (
          <div key={l.code} className={`flex flex-1 items-center pl-[3px] pr-[23px] pt-[3px] leading-none ${i < 9 ? "border-b border-[#e3e8ea]" : ""}`}>
            <span className={`mb-[5px] mr-[2px] size-[17px] rounded-full ${l.dot}`} />
            <span className="text-[19px] font-semibold tracking-[0.600px] text-[#222]">{l.code}</span>
            <span className="ml-[14px] text-[19.300px] font-medium text-[#222]">限行图层</span>
            <span className="ml-auto text-[19px] text-[#00b2fb]">更多</span>
          </div>
        ))}
      </div>
      <div className="mt-[422px] flex h-[36px] items-center gap-[11px] pl-[63px] text-[19px] leading-none text-[#4d4d4d]">
        <span className="flex h-9 w-9 items-center justify-center rounded-[4px] border border-[#d9d9d9] text-[#b8b8b8]"><Chevron dir="left" className="size-[15px]" /></span>
        <span className="flex h-9 w-9 items-center justify-center rounded-[4px] border-[1.500px] border-[#00b2fb] text-[#00b2fb]">1</span>
        <span className="flex h-9 w-9 items-center justify-center rounded-[4px] border border-[#d9d9d9]">2</span>
        <span className="flex h-9 w-9 items-center justify-center rounded-[4px] border border-[#d9d9d9]"><Chevron dir="right" className="size-[15px]" /></span>
        <span className="ml-[10px] flex h-9 w-[121px] items-center justify-between rounded-[4px] border border-[#d9d9d9] pl-[12px] pr-[10px]">
          <span>10 条/页</span>
          <Chevron dir="down" className="size-4 text-[#b8b8b8]" />
        </span>
      </div>
    </div>
  );
}

export default function App() {
  return (
    <div className="relative h-[1172px] w-[2398px] overflow-hidden bg-white pl-[10px] pr-[10px] pt-[24px] font-[Inter,'Noto_Sans_CJK_SC',sans-serif]">
      <div className="flex h-[1146px] bg-[#e6e6e6]">
        <div className="flex w-[256px] shrink-0 flex-col">
          {nav.map((item) => (
            <NavItem key={item.label} item={item} />
          ))}
        </div>
        <div className="w-[17px] shrink-0 bg-[#dcdddf]" />
        <div className="flex min-w-0 flex-1 flex-col">
          <div className="h-[15px] shrink-0 bg-[#dcdddf]" />
          <div className="flex h-[80px] shrink-0 items-center gap-[8px] whitespace-pre border-b-2 border-[#d2d2d2] bg-[#e2e2e2] pb-[6px] pl-[27px] text-[23.300px] leading-none text-[#5c5c5c]">
            <span>运输费率</span>
            <span>/</span>
            <span className="font-medium text-[#222]">区域</span>
          </div>
          <div className="flex shrink-0 gap-[28px] pl-[27px] pt-[31px] text-[23.300px] leading-none">
            <div className="flex h-[43px] w-[251px] items-center rounded-[6px] border border-[#c3c3c3] pl-[12px] text-[#222]">r%</div>
            <div className="flex h-[43px] w-[251px] items-center rounded-[6px] border border-[#c3c3c3] pl-[12px] text-[#a6a6a6]">区域描述</div>
          </div>
          <div className="ml-[27px] mt-[72px] flex h-[818px] w-[408px] shrink-0 flex-col overflow-hidden border-b-4 border-l border-t border-[#bfbfbf] text-[23.300px] leading-none tabular-nums">
            <div className="flex h-[71px] shrink-0 border-b border-[#bfbfbf] bg-[#e1e1e1] font-medium text-[#222]">
              <div className="flex w-[84px] shrink-0 items-center bg-linear-to-b from-[#e5e5e5] to-[#dcdcdc] pl-[29px] pt-[2px]"><Check /></div>
              <div className="flex w-[287px] shrink-0 items-center border-r border-[#bfbfbf] pl-[14px] pr-[14px] pt-[3px]">
                <span>区域代码</span>
                <svg className="ml-auto h-[22px] w-[13px]" viewBox="0 0 13 22" fill="#a9a9a9"><path d="M6.500 0 13 8H0ZM0 14h13l-6.500 8Z" /></svg>
                <svg className="ml-[24px] h-[17px] w-[18px]" viewBox="0 0 18 17" fill="#a9a9a9"><path d="M0 0h18l-4.500 9.500h-9ZM5 11.500h8V17H5Z" /></svg>
              </div>
              <div className="flex min-w-0 flex-1 items-center overflow-hidden pl-[12px] pt-[3px]">区</div>
            </div>
            {codes.map((n, i) => (
              <div key={n} className={`flex h-[62px] shrink-0 ${i % 2 ? "bg-[#e1e1e1]" : "bg-[#e6e6e6]"}`}>
                <div className="flex w-[84px] shrink-0 items-center pl-[29px] pt-[2px]"><Check /></div>
                <div className="flex w-[287px] shrink-0 items-center border-r border-[#bfbfbf] pl-[13px] pt-[2px] text-[#05a5e9]">r_12_{n}</div>
                <div className="flex min-w-0 flex-1 items-center overflow-hidden pl-[11px] pt-[2px] text-[#222]">r_12_{n}</div>
              </div>
            ))}
          </div>
          <div className="mt-[16px] flex h-[44px] shrink-0 items-center pl-[27px] text-[23.300px] leading-none text-[#05a5e9]">
            <div className="flex h-full w-[94px] items-center justify-center gap-[7px] rounded-[5px] bg-[#05a5e9] pt-[3px] text-[#e9f2f5]"><span>编</span><span>辑</span></div>
            <div className="ml-[17px] flex h-full w-[93px] items-center justify-center gap-[7px] rounded-[5px] border-[1.500px] border-[#05a5e9] pt-[3px]"><span>添</span><span>加</span></div>
            <div className="ml-[17px] flex h-full w-[134px] items-center justify-center rounded-[5px] border-[1.500px] border-[#05a5e9] pt-[3px]">围栏地图</div>
            <div className="ml-[17px] flex h-full w-[92px] items-center justify-center gap-[7px] rounded-[5px] border-[1.500px] border-[#05a5e9] pt-[3px]"><span>删</span><span>除</span></div>
            <div className="ml-auto flex h-full items-center pr-[33px] tabular-nums text-[#222]">
              <span className="mr-[14px] pb-[2px] text-[22.500px] tracking-[-0.300px]">1-12 of 12</span>
              <span className="flex h-full w-[44px] items-center justify-center rounded-[6px] border border-[#c3c3c3] pt-[2px] text-[#a2a2a2]"><Chevron dir="left" className="size-[19px]" /></span>
              <span className="ml-[13px] flex h-full w-[44px] items-center justify-center rounded-[6px] border-[1.500px] border-[#05a5e9] text-[#05a5e9]">1</span>
              <span className="ml-[13px] flex h-full w-[44px] items-center justify-center rounded-[6px] border border-[#c3c3c3] pt-[2px] text-[#a2a2a2]"><Chevron dir="right" className="size-[19px]" /></span>
              <span className="ml-[27px] flex h-full w-[161px] items-center justify-between rounded-[6px] border border-[#c3c3c3] pl-[13px] pr-[13px]">
                <span>500 条/页</span>
                <Chevron dir="down" className="size-[19px] text-[#a2a2a2]" />
              </span>
            </div>
          </div>
        </div>
      </div>

      <div className="absolute left-[718px] top-0 flex h-[1084px]">
        <FencePanel />
        <FenceMap />
      </div>

      <svg className="absolute left-[500px] top-[960px] h-[210px] w-[218px]" viewBox="500 960 218 210" fill="none" stroke="#ea0f06" strokeLinecap="round" strokeLinejoin="round">
        <ellipse cx="598" cy="1124" rx="85" ry="40.300" strokeWidth="4" />
        <path d="M655 1070C668 1045 681 1016 689 993 692 986 697 982 702 980M669.500 991C680 986 690 979 698 978 701 978 704 979 706 980M702 978C704 990 705 1000 705 1009" strokeWidth="4" />
      </svg>
    </div>
  );
}
